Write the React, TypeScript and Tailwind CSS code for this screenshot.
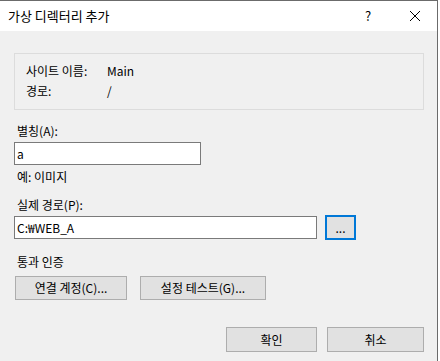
import React from "react";

const font = { fontFamily: '"Noto Sans CJK KR", "Noto Sans", sans-serif' };

function Btn({ children, className }: { children: React.ReactNode; className: string }) {
  return (
    <div className={`flex items-center justify-center border border-[#adadad] bg-[#e1e1e1] text-[12px] text-black ${className}`}>
      {children}
    </div>
  );
}

export default function App() {
  return (
    <div className="w-[440px] h-[361px] bg-white" style={font}>
      <div className="w-[438px] h-[361px] border-t border-r border-[#6b6b6b] flex flex-col bg-[#f0f0f0]">
        <div className="h-[30px] bg-white flex items-center pl-[8px] text-[13px] text-black">
          <span className="flex-1">가상 디렉터리 추가</span>
          <span className="w-[14px] mr-[30px] text-[13px]">?</span>
          <svg width="12" height="12" viewBox="0 0 12 12" className="mr-[16px]">
            <path d="M1 1 L11 11 M11 1 L1 11" stroke="#000" strokeWidth="1" fill="none" />
          </svg>
        </div>
        <div className="flex flex-col pl-[14px] pr-[13px] text-[12px] text-black">
          <div className="mt-[22px] h-[57px] border border-[#dcdcdc] flex flex-col pl-[11px] pt-[9px] gap-[4px]">
            <div className="flex h-[16px] items-center">
              <span className="w-[81px]">사이트 이름:</span>
              <span>Main</span>
            </div>
            <div className="flex h-[16px] items-center">
              <span className="w-[81px]">경로:</span>
              <span>/</span>
            </div>
          </div>
          <div className="mt-[13px] h-[16px] flex items-center pl-[3px]">별칭(A):</div>
          <div className="mt-[3px] w-[187px] h-[23px] border border-[#7a7a7a] bg-white flex items-center pl-[2px]">a</div>
          <div className="mt-[4px] h-[16px] flex items-center pl-[3px]">예: 이미지</div>
          <div className="mt-[12px] h-[16px] flex items-center pl-[3px]">실제 경로(P):</div>
          <div className="mt-[2px] flex items-center">
            <div className="w-[303px] h-[23px] border border-[#7a7a7a] bg-white flex items-center pl-[2px]">C:₩WEB_A</div>
            <div className="ml-[8px] w-[31px] h-[25px] border-2 border-[#0078d7] bg-[#e1e1e1] flex items-center justify-center">...</div>
          </div>
          <div className="mt-[14px] h-[16px] flex items-center pl-[3px]">통과 인증</div>
          <div className="mt-[6px] flex ml-[1px]">
            <Btn className="w-[112px] h-[24px]">연결 계정(C)...</Btn>
            <Btn className="ml-[13px] w-[126px] h-[24px]">설정 테스트(G)...</Btn>
          </div>
          <div className="mt-[27px] flex justify-end">
            <Btn className="w-[91px] h-[25px]">확인</Btn>
            <Btn className="ml-[10px] w-[97px] h-[25px]">취소</Btn>
          </div>
        </div>
      </div>
    </div>
  );
}
